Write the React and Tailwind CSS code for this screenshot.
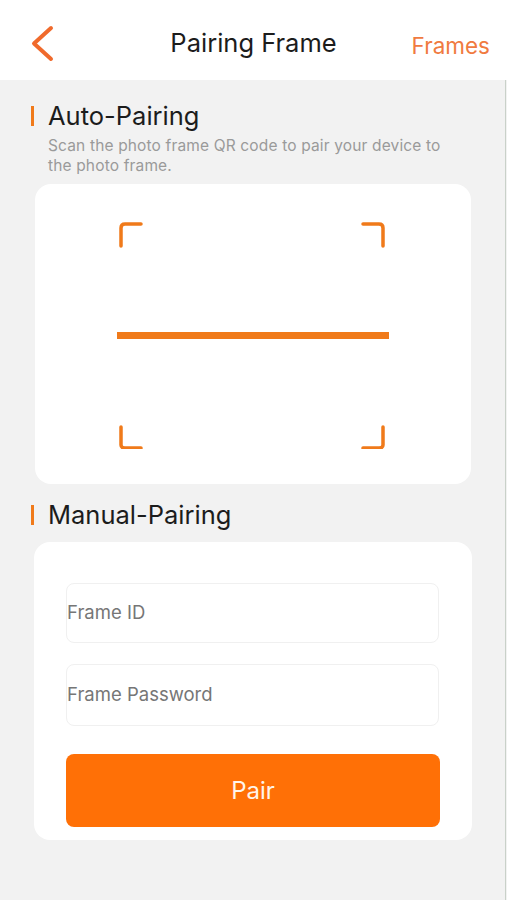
export default function App() {
  const font = { fontFamily: "Inter, 'Noto Sans', sans-serif" };
  return (
    <div className="w-[507px] h-[900px] bg-[#f2f2f2] flex flex-col relative overflow-hidden" style={font}>
      <div className="absolute right-[1px] top-0 bottom-0 w-[1px] bg-[#c9d1c9]" />
      {/* Header */}
      <div className="h-[80px] bg-white flex items-center relative">
        <svg className="absolute left-[28px] top-[24px]" width="30" height="40" viewBox="0 0 30 40">
          <path d="M23 4 L6 19.5 L23 35" fill="none" stroke="#f06a2c" strokeWidth="4" strokeLinecap="round" strokeLinejoin="round" />
        </svg>
        <div className="flex-1 text-center text-[25.5px] text-[#1c1c1c] pt-[7px]">Pairing Frame</div>
        <div className="absolute right-[17px] top-[29px] text-[22.5px] text-[#f07a40]">Frames</div>
      </div>

      {/* Auto-Pairing */}
      <div className="pl-[31px] pt-[21px] flex items-center gap-[14px]">
        <div className="w-[3px] h-[20px] bg-[#f07a1a]" />
        <div className="text-[25.5px] text-[#1c1c1c] leading-[30px]">Auto-Pairing</div>
      </div>
      <div className="pl-[48px] pr-[40px] pt-[5px] text-[15.5px] tracking-[0.15px] leading-[20px] text-[#9a9a9a]">
        Scan the photo frame QR code to pair your device to the photo frame.
      </div>

      <div className="mx-[35px] mt-[8px] w-[436px] h-[300px] bg-white rounded-[16px] flex items-center justify-center">
        <svg width="276" height="230" viewBox="0 0 276 230">
          <g fill="none" stroke="#f07a1a" strokeWidth="3.5" strokeLinecap="round" strokeLinejoin="round">
            <path d="M6 27 V9 Q6 5 10 5 H26" />
            <path d="M248 5 H264 Q268 5 268 9 V27" />
            <path d="M6 208 V226 Q6 229 10 229 H26" />
            <path d="M248 229 H264 Q268 229 268 226 V208" />
          </g>
          <rect x="2" y="113" width="272" height="7" fill="#f07a1a" />
        </svg>
      </div>

      {/* Manual-Pairing */}
      <div className="pl-[31px] pt-[16px] flex items-center gap-[14px]">
        <div className="w-[3px] h-[20px] bg-[#f07a1a]" />
        <div className="text-[25.5px] text-[#1c1c1c] leading-[30px]">Manual-Pairing</div>
      </div>

      <div className="mx-[34px] mt-[12px] w-[438px] bg-white rounded-[16px] pt-[41px] pb-[13px] pl-[32px]">
        <div className="w-[373px] h-[60px] border border-[#f0f0f0] rounded-[8px] flex items-center text-[18.5px] text-[#767676]">
          Frame ID
        </div>
        <div className="w-[373px] h-[62px] mt-[21px] border border-[#f0f0f0] rounded-[8px] flex items-center text-[18.5px] text-[#767676]">
          Frame Password
        </div>
        <div className="w-[374px] h-[73px] mt-[28px] bg-[#ff7006] rounded-[8px] flex items-center justify-center text-[24px] text-[#fff4ea]">
          Pair
        </div>
      </div>
    </div>
  );
}
